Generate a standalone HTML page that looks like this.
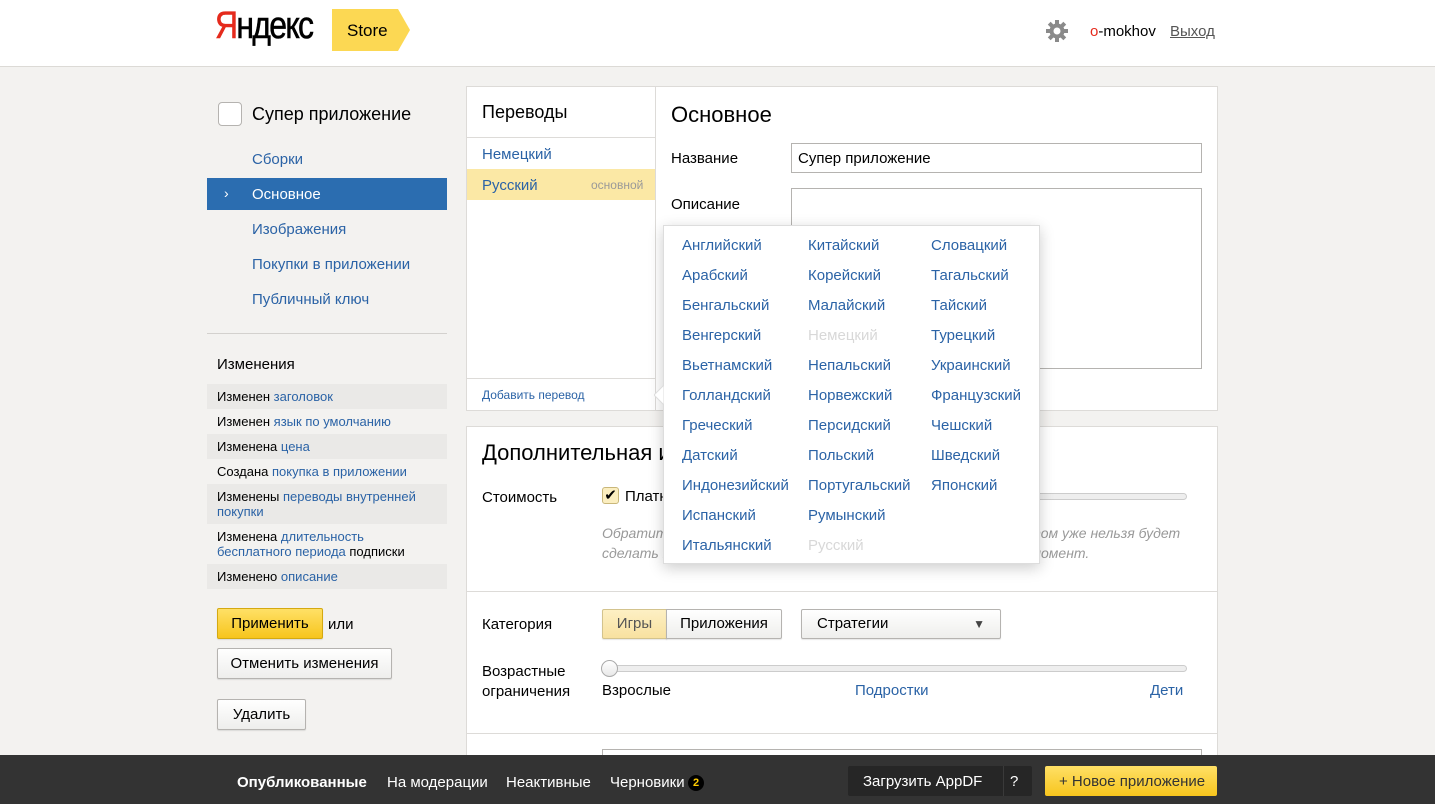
<!DOCTYPE html>
<html><head><meta charset="utf-8"><style>
*{box-sizing:border-box;margin:0;padding:0}
body{width:1435px;height:804px;overflow:hidden;background:#f3f2f0;font-family:"Liberation Sans",Arial,sans-serif;color:#000;position:relative;font-size:15px}
.a{position:absolute;white-space:nowrap}
.bl{color:#2b63a6}
.hdr{position:absolute;left:0;top:0;width:1435px;height:67px;background:#fff;border-bottom:1px solid #dcdad6}
.row{position:absolute;left:207px;width:240px;font-size:13px;padding-left:10px;padding-right:30px;line-height:15px}
.row.g{background:#eae9e7}
.btn{position:absolute;border:1px solid #b5b3b0;border-radius:2px;background:linear-gradient(#fff,#eeeeec);font-size:15px;text-align:center;box-shadow:0 1px 1px rgba(0,0,0,.1)}
.panel{position:absolute;background:#fff;border:1px solid #dddbd8}
.lang{position:absolute;font-size:15px;color:#2b63a6}
.lang.d{color:#d8d8d8}
.bot{position:absolute;left:0;top:755px;width:1435px;height:49px;background:#333}
.bot .a{color:#fff;font-size:15px;top:19px}
</style></head><body>
<div class="hdr">
 <div class="a" style="left:215px;top:5px;font-size:38px;letter-spacing:-2px;transform:scaleX(.84);transform-origin:left;-webkit-text-stroke:0.6px #000"><span style="color:#e52a1c;-webkit-text-stroke:0.6px #e52a1c">Я</span>ндекс</div>
 <svg class="a" style="left:332px;top:9px" width="80" height="42"><polygon points="0,0 66,0 78,21 66,42 0,42" fill="#fcd853"/><text x="15" y="27" font-family="Liberation Sans" font-size="17">Store</text></svg>
 <svg class="a" style="left:1045px;top:19px" width="24" height="24" viewBox="0 0 24 24"><g fill="#8a8a8a"><circle cx="12" cy="12" r="7.5"/><g id="t"><rect x="10" y="1" width="4" height="22"/><rect x="1" y="10" width="22" height="4"/></g><use href="#t" transform="rotate(45 12 12)"/></g><circle cx="12" cy="12" r="3.5" fill="#fff"/></svg>
 <div class="a" style="left:1090px;top:23px;font-size:15px"><span style="color:#e52a1c">o</span>-mokhov</div>
 <div class="a" style="left:1170px;top:23px;font-size:15px;color:#555;text-decoration:underline">Выход</div>
</div>

<div class="a" style="left:218px;top:102px;width:24px;height:24px;border:1px solid #b5b3b0;border-radius:4px;background:#fff"></div>
<div class="a" style="left:252px;top:104px;font-size:18px">Супер приложение</div>
<div class="a bl" style="left:252px;top:151px">Сборки</div>
<div class="a" style="left:207px;top:178px;width:240px;height:32px;background:#2b6db0"></div>
<div class="a" style="left:224px;top:185px;color:#fff;font-size:14px">›</div>
<div class="a" style="left:252px;top:186px;color:#fff">Основное</div>
<div class="a bl" style="left:252px;top:221px">Изображения</div>
<div class="a bl" style="left:252px;top:256px">Покупки в приложении</div>
<div class="a bl" style="left:252px;top:291px">Публичный ключ</div>
<div class="a" style="left:207px;top:333px;width:240px;height:1px;background:#d3d1ce"></div>
<div class="a" style="left:217px;top:356px;font-size:15px">Изменения</div>
<div class="row g" style="top:384px;height:25px;padding-top:5px">Изменен <span class="bl">заголовок</span></div>
<div class="row" style="top:409px;height:25px;padding-top:5px">Изменен <span class="bl">язык по умолчанию</span></div>
<div class="row g" style="top:434px;height:25px;padding-top:5px">Изменена <span class="bl">цена</span></div>
<div class="row" style="top:459px;height:25px;padding-top:5px">Создана <span class="bl">покупка в приложении</span></div>
<div class="row g" style="top:484px;height:40px;padding-top:5px;white-space:normal">Изменены <span class="bl">переводы внутренней покупки</span></div>
<div class="row" style="top:524px;height:40px;padding-top:5px;white-space:normal">Изменена <span class="bl">длительность<br>бесплатного периода</span> подписки</div>
<div class="row g" style="top:564px;height:25px;padding-top:5px">Изменено <span class="bl">описание</span></div>
<div class="btn" style="left:217px;top:608px;width:106px;height:31px;line-height:29px;background:linear-gradient(#ffe066,#f7c51d);border-color:#d4a911">Применить</div>
<div class="a" style="left:328px;top:616px">или</div>
<div class="btn" style="left:217px;top:648px;width:175px;height:31px;line-height:29px">Отменить изменения</div>
<div class="btn" style="left:217px;top:699px;width:89px;height:31px;line-height:29px">Удалить</div>

<div class="panel" style="left:466px;top:86px;width:752px;height:325px"></div>
<div class="a" style="left:655px;top:87px;width:1px;height:323px;background:#dddbd8"></div>
<div class="a" style="left:482px;top:102px;font-size:18px">Переводы</div>
<div class="a" style="left:467px;top:137px;width:188px;height:1px;background:#dddbd8"></div>
<div class="a bl" style="left:482px;top:146px">Немецкий</div>
<div class="a" style="left:467px;top:169px;width:188px;height:31px;background:#fbe8a5"></div>
<div class="a bl" style="left:482px;top:177px">Русский</div>
<div class="a" style="left:591px;top:178px;font-size:12px;color:#999">основной</div>
<div class="a" style="left:467px;top:378px;width:188px;height:1px;background:#dddbd8"></div>
<div class="a bl" style="left:482px;top:388px;font-size:12px">Добавить перевод</div>
<div class="a" style="left:671px;top:102px;font-size:22px">Основное</div>
<div class="a" style="left:671px;top:150px">Название</div>
<div class="a" style="left:791px;top:143px;width:411px;height:30px;border:1px solid #b5b3b0;padding:6px 6px;font-size:15px">Супер приложение</div>
<div class="a" style="left:671px;top:196px">Описание</div>
<div class="a" style="left:791px;top:188px;width:411px;height:181px;border:1px solid #b5b3b0;background:#fff"></div>

<div class="panel" style="left:466px;top:426px;width:752px;height:340px"></div>
<div class="a" style="left:482px;top:440px;font-size:22px">Дополнительная информация</div>
<div class="a" style="left:482px;top:489px">Стоимость</div>
<div class="a" style="left:602px;top:487px;width:17px;height:17px;border:1px solid #c9b77a;border-radius:3px;background:#fbeec0;font-size:15px;line-height:15px;text-align:center">✔</div>
<div class="a" style="left:625px;top:488px">Платное</div>
<div class="a" style="left:700px;top:493px;width:487px;height:7px;border:1px solid #ccc;border-radius:4px;background:#eee"></div>
<div class="a" style="left:602px;top:523px;color:#999;font-style:italic;line-height:20px;font-size:14px">Обратите внимание, что сделать приложение бесплатным потом уже нельзя будет<br>сделать платным, но бесплатным его можно сделать в любой момент.</div>
<div class="a" style="left:467px;top:591px;width:750px;height:1px;background:#dddbd8"></div>
<div class="a" style="left:482px;top:616px">Категория</div>
<div class="btn" style="left:602px;top:609px;width:65px;height:30px;line-height:28px;background:linear-gradient(#fdf0c4,#f8e1a0);border-color:#d3c38d;border-radius:2px 0 0 2px;color:#555">Игры</div>
<div class="btn" style="left:666px;top:609px;width:116px;height:30px;line-height:28px;border-radius:0 2px 2px 0">Приложения</div>
<div class="btn" style="left:801px;top:609px;width:200px;height:30px;line-height:28px;text-align:left;padding-left:15px">Стратегии<span style="position:absolute;right:15px;font-size:12px;color:#444">▼</span></div>
<div class="a" style="left:482px;top:662px;line-height:20px">Возрастные<br>ограничения</div>
<div class="a" style="left:603px;top:665px;width:584px;height:7px;border:1px solid #ccc;border-radius:4px;background:#eee"></div>
<div class="a" style="left:601px;top:660px;width:17px;height:17px;border:1px solid #aaa;border-radius:50%;background:linear-gradient(#fff,#e8e8e8)"></div>
<div class="a" style="left:602px;top:682px">Взрослые</div>
<div class="a bl" style="left:855px;top:682px">Подростки</div>
<div class="a bl" style="left:1150px;top:682px">Дети</div>
<div class="a" style="left:467px;top:733px;width:750px;height:1px;background:#dddbd8"></div>
<div class="a" style="left:602px;top:749px;width:600px;height:20px;border:1px solid #b5b3b0;background:#fff"></div>

<div class="a" style="left:663px;top:225px;width:377px;height:339px;background:#fff;border:1px solid #ddd;box-shadow:0 4px 14px rgba(0,0,0,.2)"></div>
<svg class="a" style="left:654px;top:385px" width="11" height="20"><polygon points="10,0 0,10 10,20" fill="#fff" stroke="#ddd"/><rect x="10" y="0" width="2" height="20" fill="#fff"/></svg>
<div class="lang" style="left:682px;top:237px">Английский</div><div class="lang" style="left:808px;top:237px">Китайский</div><div class="lang" style="left:931px;top:237px">Словацкий</div>
<div class="lang" style="left:682px;top:267px">Арабский</div><div class="lang" style="left:808px;top:267px">Корейский</div><div class="lang" style="left:931px;top:267px">Тагальский</div>
<div class="lang" style="left:682px;top:297px">Бенгальский</div><div class="lang" style="left:808px;top:297px">Малайский</div><div class="lang" style="left:931px;top:297px">Тайский</div>
<div class="lang" style="left:682px;top:327px">Венгерский</div><div class="lang d" style="left:808px;top:327px">Немецкий</div><div class="lang" style="left:931px;top:327px">Турецкий</div>
<div class="lang" style="left:682px;top:357px">Вьетнамский</div><div class="lang" style="left:808px;top:357px">Непальский</div><div class="lang" style="left:931px;top:357px">Украинский</div>
<div class="lang" style="left:682px;top:387px">Голландский</div><div class="lang" style="left:808px;top:387px">Норвежский</div><div class="lang" style="left:931px;top:387px">Французский</div>
<div class="lang" style="left:682px;top:417px">Греческий</div><div class="lang" style="left:808px;top:417px">Персидский</div><div class="lang" style="left:931px;top:417px">Чешский</div>
<div class="lang" style="left:682px;top:447px">Датский</div><div class="lang" style="left:808px;top:447px">Польский</div><div class="lang" style="left:931px;top:447px">Шведский</div>
<div class="lang" style="left:682px;top:477px">Индонезийский</div><div class="lang" style="left:808px;top:477px">Португальский</div><div class="lang" style="left:931px;top:477px">Японский</div>
<div class="lang" style="left:682px;top:507px">Испанский</div><div class="lang" style="left:808px;top:507px">Румынский</div>
<div class="lang" style="left:682px;top:537px">Итальянский</div><div class="lang d" style="left:808px;top:537px">Русский</div>

<div class="bot">
 <div class="a" style="left:237px;font-weight:bold">Опубликованные</div>
 <div class="a" style="left:387px">На модерации</div>
 <div class="a" style="left:506px">Неактивные</div>
 <div class="a" style="left:610px">Черновики</div>
 <div class="a" style="left:688px;top:20px;width:16px;height:16px;border-radius:50%;background:#000;color:#fc0;font-size:11px;font-weight:bold;text-align:center;line-height:16px">2</div>
 <div class="a" style="left:848px;top:11px;width:184px;height:30px;background:#262626;border-radius:2px"></div>
 <div class="a" style="left:1003px;top:11px;width:1px;height:30px;background:#3a3a3a"></div>
 <div class="a" style="left:863px;top:18px">Загрузить AppDF</div>
 <div class="a" style="left:1010px;top:18px">?</div>
 <div class="a" style="left:1045px;top:11px;width:172px;height:30px;background:linear-gradient(#ffe066,#f7c51d);border-radius:2px"></div>
 <div class="a" style="left:1059px;top:18px;color:#333">+ Новое приложение</div>
</div>
</body></html>
